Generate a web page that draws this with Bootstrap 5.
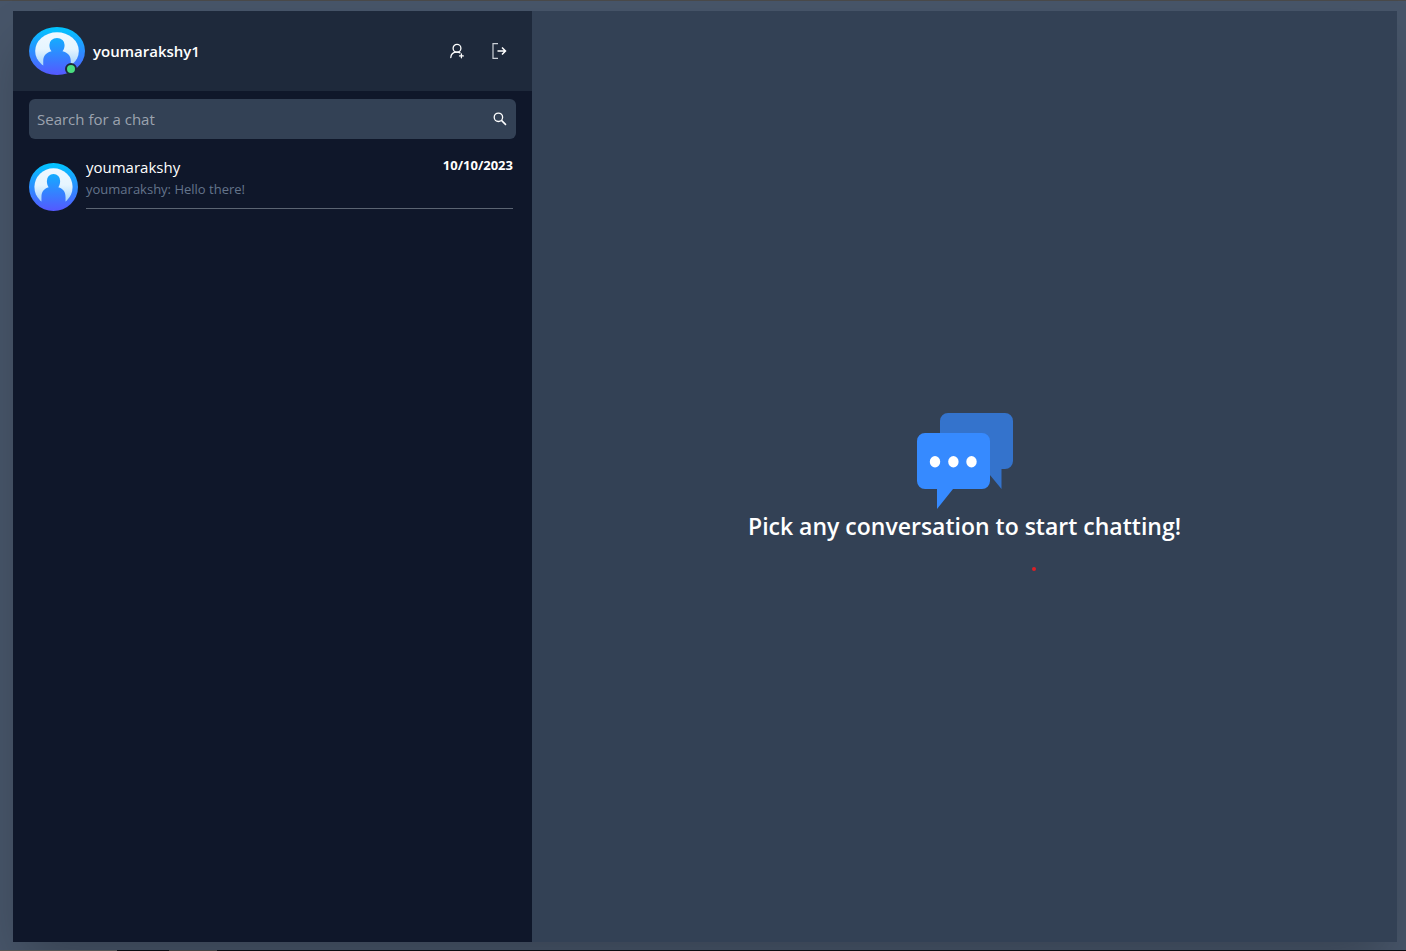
<!DOCTYPE html>
<html lang="en">
<head>
<meta charset="utf-8">
<meta name="viewport" content="width=device-width, initial-scale=1">
<title>Chats</title>
<link href="https://cdn.jsdelivr.net/npm/bootstrap@5.3.0/dist/css/bootstrap.min.css" rel="stylesheet">
<style>
  body { background: #475569; font-family: "Open Sans", "Noto Sans", sans-serif; font-size: 15px; line-height: 24px; }
  .frame { border-top: 1px solid #4a4a4a; padding: 10px 9px 8px 13px; }
  .app { box-shadow: 0 25px 50px -12px rgba(0, 0, 0, .25); }
  .sidebar { width: 37.5%; background: #0f172a; }
  .profile { background: #1e293b; height: 80px; }
  .online { width: 12px; height: 12px; right: 8px; bottom: 0; background: #4ade80; border: 2px solid #1e293b; box-sizing: border-box; }
  .icon-btn { padding: 8px; line-height: 0; color: #fff; }
  .search-box { background: #334155; height: 40px; border-radius: 6px; }
  .search-box input, .search-box input:focus { background: transparent; border: 0; box-shadow: none; color: #fff; padding: 0 8px; font-size: 15px; }
  .search-box input::placeholder { color: #9ca3af; opacity: 1; }
  .chat { color: #fff; padding: 16px 19px 0 16px; }
  .chat-info { border-bottom: 1px solid #5b6472; height: 54px; }
  .chat-date { font-size: 13px; line-height: 20px; font-weight: 700; }
  .chat-last { font-size: 13px; line-height: 20px; color: #64748b; }
  .main-pane { background: #334155; }
  .prompt { font-size: 23px; line-height: 30px; padding-top: 2px; font-weight: 600; }
  .marker { width: 4px; height: 4px; left: 57.8%; top: 59.7%; background: #dc1f26; }
  .taskbar { height: 1px; background: linear-gradient(90deg, #555 117px, #0b0d12 117px 169px, #444 169px 217px, #0b0d12 217px); }
</style>
</head>
<body>
<svg width="0" height="0" class="position-absolute" aria-hidden="true">
  <defs>
    <linearGradient id="ring" x1="0" y1="0" x2="0" y2="48" gradientUnits="userSpaceOnUse"><stop offset="0" stop-color="#00c6ff"/><stop offset="1" stop-color="#5558ff"/></linearGradient>
    <linearGradient id="disc" x1="0" y1="5" x2="0" y2="43" gradientUnits="userSpaceOnUse"><stop offset="0" stop-color="#f0f8ff"/><stop offset=".45" stop-color="#e6f5ff"/><stop offset="1" stop-color="#94ccfa"/></linearGradient>
    <symbol id="avatar" viewBox="0 0 48 48" preserveAspectRatio="none">
      <circle cx="24" cy="24" r="24" fill="url(#ring)"/>
      <circle cx="24" cy="24" r="18.700" fill="url(#disc)"/>
      <path fill="url(#ring)" d="M24 11a6.500 6.700 0 0 1 6.500 7c0 2.500-.6 4.600-1.800 6.200C33 25.300 35.800 28.500 35.800 34v5.500L32 44H16l-3.800-4.500V34c0-5.500 2.800-8.700 7.100-9.800-1.200-1.600-1.800-3.700-1.800-6.200a6.500 6.700 0 0 1 6.500-7z"/>
    </symbol>
  </defs>
</svg>
<div class="vh-100 d-flex flex-column overflow-hidden">
  <div class="frame flex-grow-1 d-flex">
    <div class="app d-flex flex-grow-1">
      <aside class="sidebar flex-shrink-0">
        <header class="profile d-flex align-items-center px-3">
          <div class="position-relative d-flex me-2">
            <svg width="56" height="48" role="img" aria-label="Profile picture"><use href="#avatar"/></svg>
            <span class="online position-absolute rounded-circle"></span>
          </div>
          <span class="fw-semibold text-white">youmarakshy1</span>
          <div class="ms-auto d-flex gap-2">
            <button type="button" class="btn icon-btn border-0" aria-label="Add contact">
              <svg width="18" height="18" viewBox="0 0 18 18" fill="none" stroke="#fff" stroke-width="1.300" stroke-linecap="round"><circle cx="9" cy="6.200" r="3.900"/><path d="M2.800 15.500c.2-3.300 2.600-5.300 6.200-5.300 1.200 0 2.200.2 3 .6M13.400 12v3.800M11.500 13.900h3.800"/></svg>
            </button>
            <button type="button" class="btn icon-btn border-0" aria-label="Log out">
              <svg width="18" height="18" viewBox="0 0 18 18" fill="none" stroke="#fff" stroke-width="1.200"><path d="M8 1.600H3v14.800h5" stroke="#cbd0d8"/><path d="M7.500 9H16M12 5.500 15.500 9 12 12.500" stroke-width="1.500"/></svg>
            </button>
          </div>
        </header>
        <div class="px-3 pt-2">
          <div class="search-box d-flex align-items-center">
            <input type="text" class="form-control h-100" placeholder="Search for a chat" aria-label="Search for a chat">
            <button type="button" class="btn icon-btn border-0" aria-label="Search">
              <svg width="16" height="16" viewBox="0 0 16 16" fill="none" stroke="#fff" stroke-width="1.300"><circle cx="6.400" cy="6.300" r="4.200"/><path d="m9.500 9.400 4.500 4.500" stroke-width="1.500"/></svg>
            </button>
          </div>
        </div>
        <a href="#" class="chat d-flex align-items-start text-decoration-none">
          <svg class="flex-shrink-0 me-2 mt-2" width="49" height="48" role="img" aria-label="youmarakshy"><use href="#avatar"/></svg>
          <div class="chat-info flex-grow-1 d-flex justify-content-between">
            <div>
              <div>youmarakshy</div>
              <div class="chat-last">youmarakshy: Hello there!</div>
            </div>
            <div class="chat-date">10/10/2023</div>
          </div>
        </a>
      </aside>
      <main class="main-pane position-relative flex-grow-1 d-flex flex-column align-items-center justify-content-center text-white">
        <svg width="96" height="96" viewBox="0 0 96 96" aria-hidden="true">
          <path fill="#3473cc" d="M31 0h57a8 8 0 0 1 8 8v40a8 8 0 0 1-8 8h-3.500v20L68 56H31a8 8 0 0 1-8-8V8a8 8 0 0 1 8-8z"/>
          <path fill="#368aff" d="M8 20h57a8 8 0 0 1 8 8v40a8 8 0 0 1-8 8H36L20 96V76H8a8 8 0 0 1-8-8V28a8 8 0 0 1 8-8z"/>
          <g fill="#fff"><ellipse cx="18" cy="48.700" rx="5.200" ry="5.700"/><ellipse cx="36.400" cy="48.700" rx="5.200" ry="5.700"/><ellipse cx="54.500" cy="48.700" rx="5.200" ry="5.700"/></g>
        </svg>
        <div class="prompt">Pick any conversation to start chatting!</div>
        <span class="marker position-absolute rounded-circle"></span>
      </main>
    </div>
  </div>
  <div class="taskbar flex-shrink-0"></div>
</div>
<script src="https://cdn.jsdelivr.net/npm/bootstrap@5.3.0/dist/js/bootstrap.bundle.min.js"></script>
</body>
</html>
